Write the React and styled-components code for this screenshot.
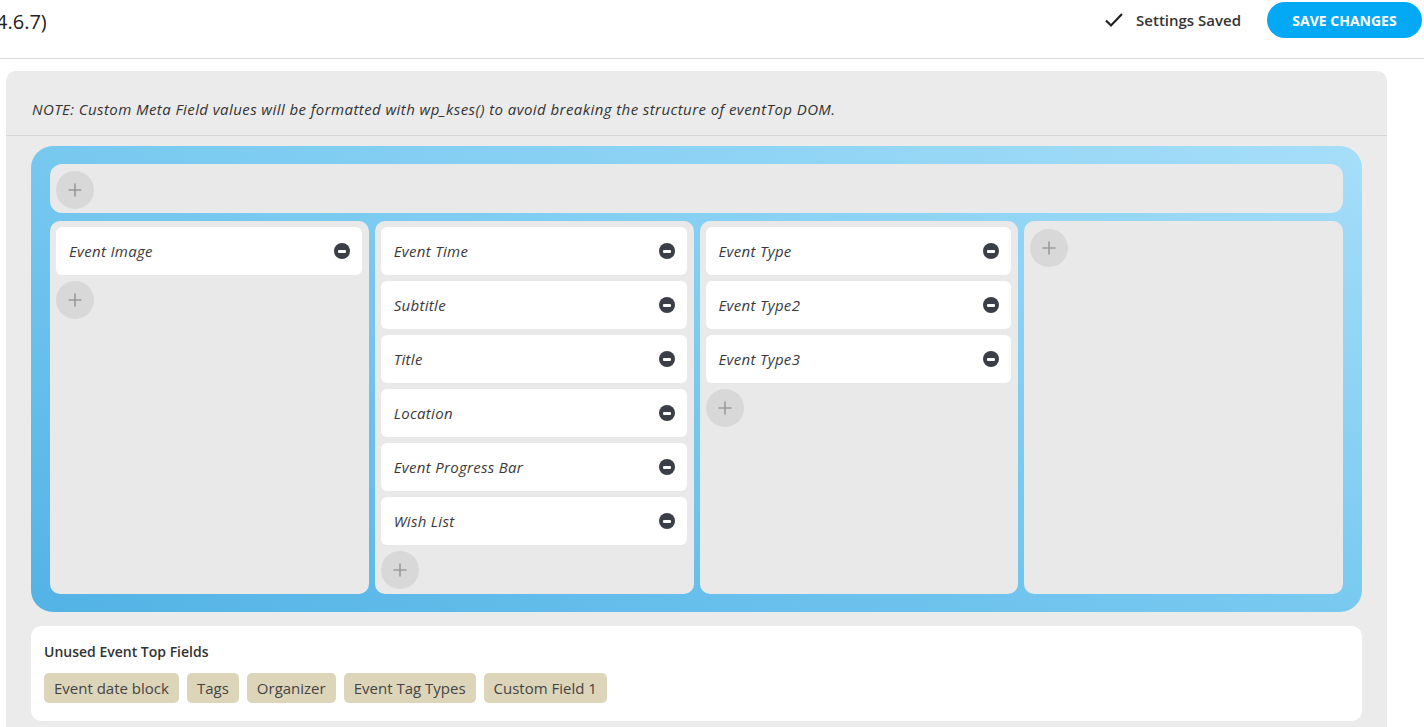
import React from "react";
import styled, { createGlobalStyle } from "styled-components";

const GlobalStyle = createGlobalStyle`
  html, body {
    margin: 0;
    padding: 0;
    background: #fff;
    font-family: "Open Sans", "Noto Sans", sans-serif;
    color: #333;
    overflow: hidden;
  }
`;

const Header = styled.div`
  align-items: center;
  border-bottom: 1px solid #dcdcdc;
  box-sizing: border-box;
  display: flex;
  height: 59px;
  justify-content: space-between;
  padding: 0 2px 18px 0;
`;

const Version = styled.div`
  color: #222;
  font-size: 20px;
  margin-left: -4px;
  margin-top: 2px;
`;

const Actions = styled.div`
  align-items: center;
  display: flex;
  gap: 26px;
`;

const Saved = styled.div`
  align-items: center;
  color: #333;
  display: flex;
  font-size: 15px;
  font-weight: 600;
  gap: 12px;
`;

const SaveButton = styled.button`
  background: #04a9f5;
  border: none;
  border-radius: 20px;
  color: #fff;
  font-family: inherit;
  font-size: 14px;
  font-weight: 700;
  height: 36px;
  padding: 0;
  width: 155px;
`;

const Page = styled.div`
  padding: 12px 37px 0 6px;
`;

const Panel = styled.div`
  background: #ebebeb;
  border-radius: 10px 10px 0 0;
  height: 700px;
`;

const Note = styled.div`
  border-bottom: 1px solid #d6d6d6;
  color: #333;
  font-size: 15px;
  font-style: italic;
  letter-spacing: 0.42px;
  padding: 28px 26px 16px;
`;

const Body = styled.div`
  padding: 10px 25px 0;
`;

const Board = styled.div`
  background: linear-gradient(20deg, #53b3e5 0%, #7ccbf1 55%, #a6def9 100%);
  border-radius: 22px;
  display: flex;
  flex-direction: column;
  gap: 8px;
  padding: 18px 19px;
`;

const TopRow = styled.div`
  background: #e9e9e9;
  border-radius: 12px;
  box-sizing: border-box;
  height: 49px;
  padding: 8px 6px;
`;

const Columns = styled.div`
  display: grid;
  gap: 6px;
  grid-template-columns: repeat(4, 1fr);
`;

const Column = styled.div`
  background: #e9e9e9;
  border-radius: 10px;
  box-sizing: border-box;
  display: flex;
  flex-direction: column;
  gap: 6px;
  height: 373px;
  padding: 6px 7px 6px 6px;
`;

const Card = styled.div`
  align-items: center;
  background: #fff;
  border-radius: 6px;
  display: flex;
  flex-shrink: 0;
  height: 48px;
  justify-content: space-between;
  padding: 0 13px;
`;

const CardLabel = styled.span`
  color: #3a3a3a;
  font-size: 15px;
  font-style: italic;
  letter-spacing: 0.3px;
`;

const Remove = styled.span`
  align-items: center;
  background: #3a3f47;
  border-radius: 50%;
  display: flex;
  height: 16px;
  justify-content: center;
  margin-right: -1px;
  width: 16px;

  &::after {
    background: #fff;
    border-radius: 1px;
    content: "";
    height: 3px;
    width: 8px;
  }
`;

const Add = styled.span`
  align-items: center;
  background: #d9d8d9;
  border-radius: 50%;
  color: #9a9a9a;
  display: flex;
  flex-shrink: 0;
  height: 38px;
  justify-content: center;
  margin-top: ${(p) => p.$offset || 0}px;
  width: 38px;
`;

const Unused = styled.div`
  background: #fff;
  border-radius: 10px;
  margin-top: 14px;
  padding: 16px 13px 18px;
`;

const UnusedTitle = styled.div`
  color: #333;
  font-size: 14px;
  font-weight: 600;
  margin-bottom: 12px;
`;

const Tags = styled.div`
  display: flex;
  gap: 8px;
`;

const Tag = styled.span`
  background: #ddd5ba;
  border-radius: 5px;
  color: #444;
  font-size: 15px;
  line-height: 30px;
  padding: 0 10px;
`;

const PlusIcon = () => (
  <svg width="16" height="16" viewBox="0 0 16 16">
    <path d="M8 1.5v13M1.5 8h13" stroke="currentColor" strokeWidth="1.6" />
  </svg>
);

const columns = [
  ["Event Image"],
  ["Event Time", "Subtitle", "Title", "Location", "Event Progress Bar", "Wish List"],
  ["Event Type", "Event Type2", "Event Type3"],
  [],
];

const unused = ["Event date block", "Tags", "Organizer", "Event Tag Types", "Custom Field 1"];

const App = () => (
  <>
    <GlobalStyle />
    <Header>
      <Version>4.6.7)</Version>
      <Actions>
        <Saved>
          <svg width="20" height="16" viewBox="0 0 20 16">
            <path d="M2 8.5l5 5L18 2" fill="none" stroke="#222" strokeWidth="2.2" />
          </svg>
          Settings Saved
        </Saved>
        <SaveButton>SAVE CHANGES</SaveButton>
      </Actions>
    </Header>
    <Page>
      <Panel>
        <Note>
          NOTE: Custom Meta Field values will be formatted with wp_kses() to avoid breaking the
          structure of eventTop DOM.
        </Note>
        <Body>
          <Board>
            <TopRow>
              <Add $offset={-1}>
                <PlusIcon />
              </Add>
            </TopRow>
            <Columns>
              {columns.map((items, i) => (
                <Column key={i}>
                  {items.map((label) => (
                    <Card key={label}>
                      <CardLabel>{label}</CardLabel>
                      <Remove />
                    </Card>
                  ))}
                  <Add $offset={items.length ? 0 : 2}>
                    <PlusIcon />
                  </Add>
                </Column>
              ))}
            </Columns>
          </Board>
          <Unused>
            <UnusedTitle>Unused Event Top Fields</UnusedTitle>
            <Tags>
              {unused.map((t) => (
                <Tag key={t}>{t}</Tag>
              ))}
            </Tags>
          </Unused>
        </Body>
      </Panel>
    </Page>
  </>
);

export default App;
